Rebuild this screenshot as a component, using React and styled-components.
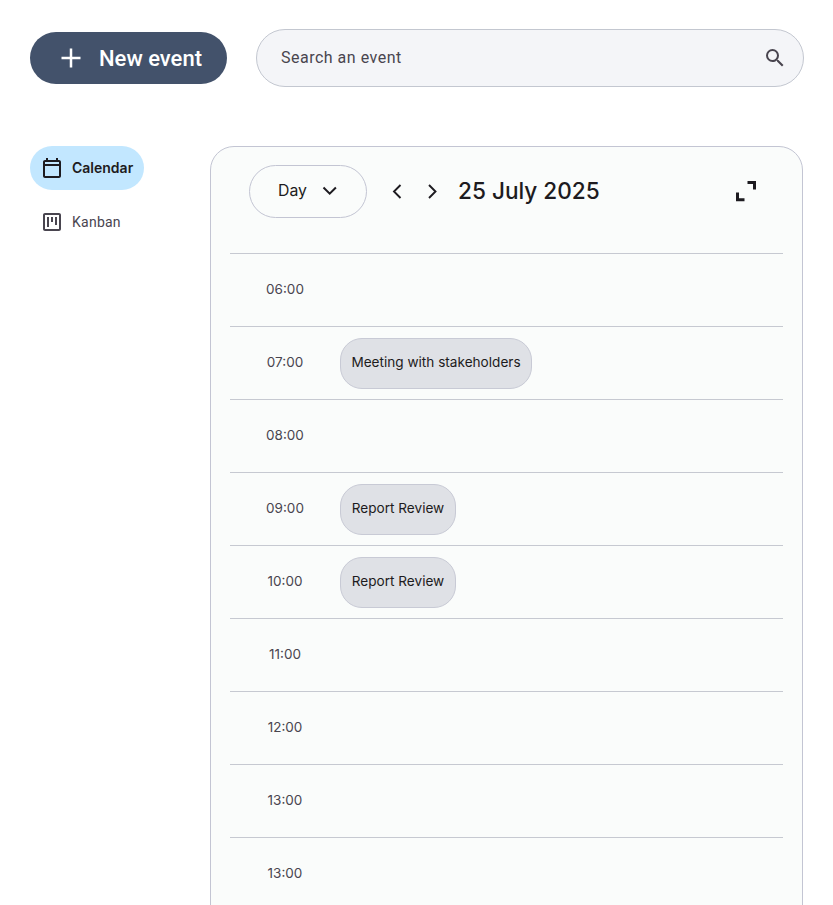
import React from "react";
import styled, { createGlobalStyle } from "styled-components";

const GlobalStyle = createGlobalStyle`
  * { box-sizing: border-box; }
  html, body { margin: 0; height: 100%; overflow: hidden; background: #fff; }
  #root { height: 100%; }
  button { font: inherit; border: 0; padding: 0; background: none; cursor: pointer; }
  svg { display: block; flex: none; }
`;

const Page = styled.div`
  height: 905px;
  width: 833px;
  padding: 29px 29px 0 30px;
  overflow: hidden;
  color: #1d1b20;
  font-family: Inter, "Liberation Sans", sans-serif;
`;

const Header = styled.header`
  display: flex;
  align-items: center;
  gap: 29px;
  height: 58px;
`;

const NewEventButton = styled.button`
  && {
    display: flex;
    align-items: center;
    width: 197px;
    height: 52px;
    padding-left: 31px;
    gap: 18px;
    border-radius: 26px;
    background: #43526b;
    color: #fff;
    font: 500 22px/28px Roboto, sans-serif;
    white-space: nowrap;
  }
`;

const ButtonLabel = styled.span`
  padding-top: 2px;
`;

const SearchBar = styled.label`
  display: flex;
  align-items: center;
  width: 548px;
  height: 58px;
  padding: 0 16px 0 24px;
  border: 1px solid #c3c7d0;
  border-radius: 29px;
  background: #f4f5f8;
  color: #49454f;
`;

const SearchInput = styled.input`
  flex: 1;
  border: 0;
  padding: 0;
  outline: 0;
  background: transparent;
  color: #49454f;
  font: 400 16px/24px Roboto, sans-serif;
  letter-spacing: 0.5px;
  &::placeholder { color: #49454f; opacity: 1; }
`;

const Body = styled.main`
  display: flex;
  gap: 66px;
  margin-top: 59px;
`;

const Sidebar = styled.nav`
  display: flex;
  flex-direction: column;
  align-items: flex-start;
  gap: 10px;
  width: 114px;
`;

const NavItem = styled.button`
  && {
    display: flex;
    align-items: center;
    gap: 8px;
    width: 114px;
    height: 44px;
    padding-left: 10px;
    border-radius: 22px;
    background: ${(p) => (p.$active ? "#c2e7ff" : "transparent")};
    color: ${(p) => (p.$active ? "#1d1b20" : "#49454f")};
    font: ${(p) => (p.$active ? "600 14px/20px Inter" : "400 14px/20px Roboto")}, sans-serif;
    letter-spacing: ${(p) => (p.$active ? "0" : "0.25px")};
  }
`;

const Panel = styled.section`
  width: 592.5px;
  height: 800px;
  padding: 0 19px;
  border: 1px solid #c3c5d3;
  border-radius: 24px;
  background: #fafcfb;
`;

const Toolbar = styled.div`
  display: flex;
  align-items: center;
  height: 106px;
  padding: 0 23px 17px 19px;
`;

const ViewSelect = styled.button`
  && {
    display: flex;
    align-items: center;
    gap: 15px;
    width: 118px;
    height: 53px;
    padding: 0 0 1px 28px;
    border: 1px solid #c3c5d3;
    border-radius: 27px;
    color: #1d1b20;
    font: 400 15.8px/24px Inter, sans-serif;
    font-optical-sizing: none;
  }
`;

const Stepper = styled.div`
  display: flex;
  gap: 11px;
  margin-left: 18px;
`;

const IconButton = styled.button`
  display: flex;
  color: #1d1b20;
`;

const DateTitle = styled.h1`
  flex: 1;
  margin: 0 0 2px 14px;
  font: 450 22.6px/28px Inter, sans-serif;
  font-optical-sizing: none;
`;

const HourRow = styled.div`
  display: flex;
  align-items: center;
  height: 73px;
  border-top: 1px solid #c6c9d1;
`;

const Hour = styled.time`
  width: 110px;
  padding-bottom: 2px;
  text-align: center;
  color: #49454f;
  font: 400 13.5px/20px Inter, sans-serif;
`;

const EventChip = styled.div`
  display: flex;
  align-items: center;
  justify-content: center;
  width: ${(p) => p.$width}px;
  height: 51px;
  padding-bottom: 2px;
  border: 1px solid #c8cad5;
  border-radius: 22px;
  background: #dfe1e6;
  color: #1d1b20;
  font: 400 13.6px/20px Inter, sans-serif;
  white-space: nowrap;
`;

function Icon({ d, size = 24 }) {
  return (
    <svg width={size} height={size} viewBox="0 0 24 24" fill="currentColor" aria-hidden="true">
      <path d={d} />
    </svg>
  );
}

function LineIcon({ d, width = 24, height = 24, weight = 2 }) {
  return (
    <svg width={width} height={height} viewBox={`0 0 ${width} ${height}`} fill="none" stroke="currentColor" strokeWidth={weight} aria-hidden="true">
      <path d={d} />
    </svg>
  );
}

const icons = {
  search: "M15.5 14h-.79l-.28-.27A6.47 6.47 0 0 0 16 9.5 6.5 6.5 0 1 0 9.5 16c1.61 0 3.09-.59 4.23-1.57l.27.28v.79l5 4.99L20.49 19zm-6 0C7.01 14 5 11.99 5 9.5S7.01 5 9.5 5 14 7.01 14 9.5 11.99 14 9.5 14",
  calendar: "M19 4h-1V2h-2v2H8V2H6v2H5c-1.1 0-2 .9-2 2v14c0 1.1.9 2 2 2h14c1.1 0 2-.9 2-2V6c0-1.1-.9-2-2-2m0 16H5V10h14zm0-12H5V6h14z",
  kanban: "M19 3H5c-1.1 0-2 .9-2 2v14c0 1.1.9 2 2 2h14c1.1 0 2-.9 2-2V5c0-1.1-.9-2-2-2m0 16H5V5h14zM7 7h2v10H7zm4 0h2v5h-2zm4 0h2v8h-2z",
  expand: "M0 12.500h3v5.700h5.500v3H0zM11.500 1H20v8.500h-3V4H11.500z",
};

const schedule = [
  { hour: "06:00" },
  { hour: "07:00", event: "Meeting with stakeholders", width: 192 },
  { hour: "08:00" },
  { hour: "09:00", event: "Report Review", width: 116 },
  { hour: "10:00", event: "Report Review", width: 116 },
  { hour: "11:00" },
  { hour: "12:00" },
  { hour: "13:00" },
  { hour: "13:00" },
];

export default function App() {
  return (
    <Page>
      <GlobalStyle />
      <Header>
        <NewEventButton>
          <LineIcon d="M10 .5v19M.5 10h19" width={20} height={20} weight={2.5} />
          <ButtonLabel>New event</ButtonLabel>
        </NewEventButton>
        <SearchBar>
          <SearchInput placeholder="Search an event" />
          <Icon d={icons.search} />
        </SearchBar>
      </Header>
      <Body>
        <Sidebar>
          <NavItem $active>
            <Icon d={icons.calendar} />
            Calendar
          </NavItem>
          <NavItem>
            <Icon d={icons.kanban} />
            Kanban
          </NavItem>
        </Sidebar>
        <Panel>
          <Toolbar>
            <ViewSelect>
              Day
              <LineIcon d="M1.500 8.500 7.700 14.700l6.200-6.200" width={16} />
            </ViewSelect>
            <Stepper>
              <IconButton aria-label="Previous day"><LineIcon d="M15.500 5 9 11.500l6.500 6.500" weight={1.9} /></IconButton>
              <IconButton aria-label="Next day"><LineIcon d="M9 5l6.500 6.500L9 18" weight={1.9} /></IconButton>
            </Stepper>
            <DateTitle>25 July 2025</DateTitle>
            <IconButton aria-label="Expand"><Icon d={icons.expand} /></IconButton>
          </Toolbar>
          {schedule.map((slot, i) => (
            <HourRow key={i}>
              <Hour>{slot.hour}</Hour>
              {slot.event && <EventChip $width={slot.width}>{slot.event}</EventChip>}
            </HourRow>
          ))}
        </Panel>
      </Body>
    </Page>
  );
}
